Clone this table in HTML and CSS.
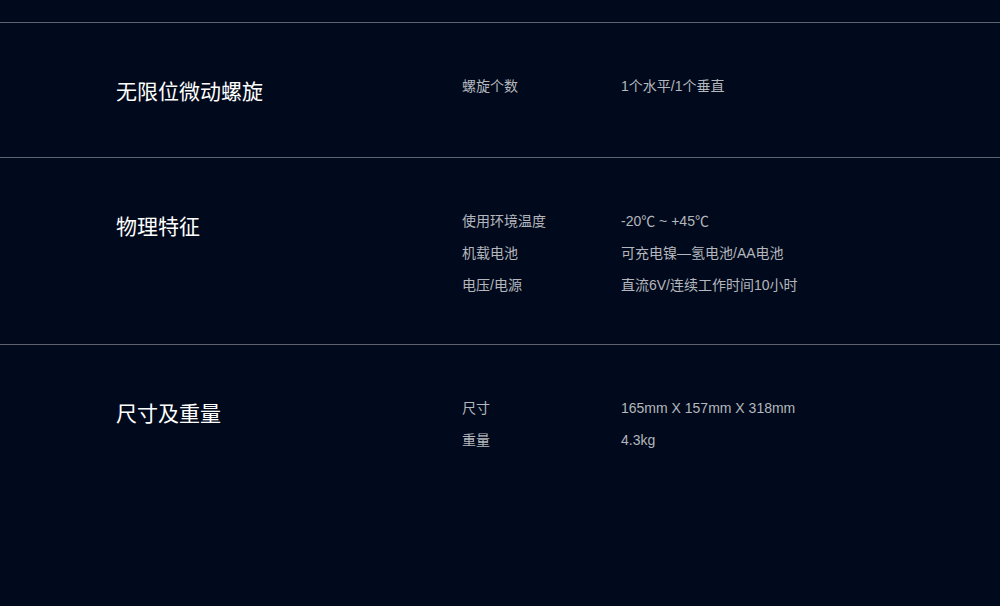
FILE: index.html
```html
<!DOCTYPE html>
<html lang="zh-CN">
<head>
<meta charset="utf-8">
<title>参数</title>
<link rel="stylesheet" href="styles.css">
</head>
<body>
<div class="page">
  <section class="spec">
    <h2 class="spec-title">无限位微动螺旋</h2>
    <dl class="spec-list">
      <div class="spec-row"><dt>螺旋个数</dt><dd>1个水平/1个垂直</dd></div>
    </dl>
  </section>
  <section class="spec">
    <h2 class="spec-title">物理特征</h2>
    <dl class="spec-list">
      <div class="spec-row"><dt>使用环境温度</dt><dd>-20℃ ~ +45℃</dd></div>
      <div class="spec-row"><dt>机载电池</dt><dd>可充电镍—氢电池/AA电池</dd></div>
      <div class="spec-row"><dt>电压/电源</dt><dd>直流6V/连续工作时间10小时</dd></div>
    </dl>
  </section>
  <section class="spec">
    <h2 class="spec-title">尺寸及重量</h2>
    <dl class="spec-list">
      <div class="spec-row"><dt>尺寸</dt><dd>165mm X 157mm X 318mm</dd></div>
      <div class="spec-row"><dt>重量</dt><dd>4.3kg</dd></div>
    </dl>
  </section>
</div>
</body>
</html>
```

FILE: styles.css
```css
html, body {
  margin: 0;
  padding: 0;
  background: #010a1c;
}
body {
  font-family: "Liberation Sans", "Noto Sans CJK SC", sans-serif;
  color: #b4b7bd;
  height: 606px;
  overflow: hidden;
}
.page {
  padding-top: 22px;
}
.spec {
  display: grid;
  grid-template-columns: 346px 1fr;
  padding: 47px 0 43px 116px;
  border-top: 1px solid #5f636d;
}
.spec-title {
  margin: 0;
  font-size: 21px;
  font-weight: normal;
  line-height: 44px;
  color: #ffffff;
  align-self: start;
}
.spec-list {
  margin: 0;
  display: flex;
  flex-direction: column;
}
.spec-row {
  display: grid;
  grid-template-columns: 159px 1fr;
  font-size: 14px;
  line-height: 32px;
}
.spec-row dt,
.spec-row dd {
  margin: 0;
}
```
